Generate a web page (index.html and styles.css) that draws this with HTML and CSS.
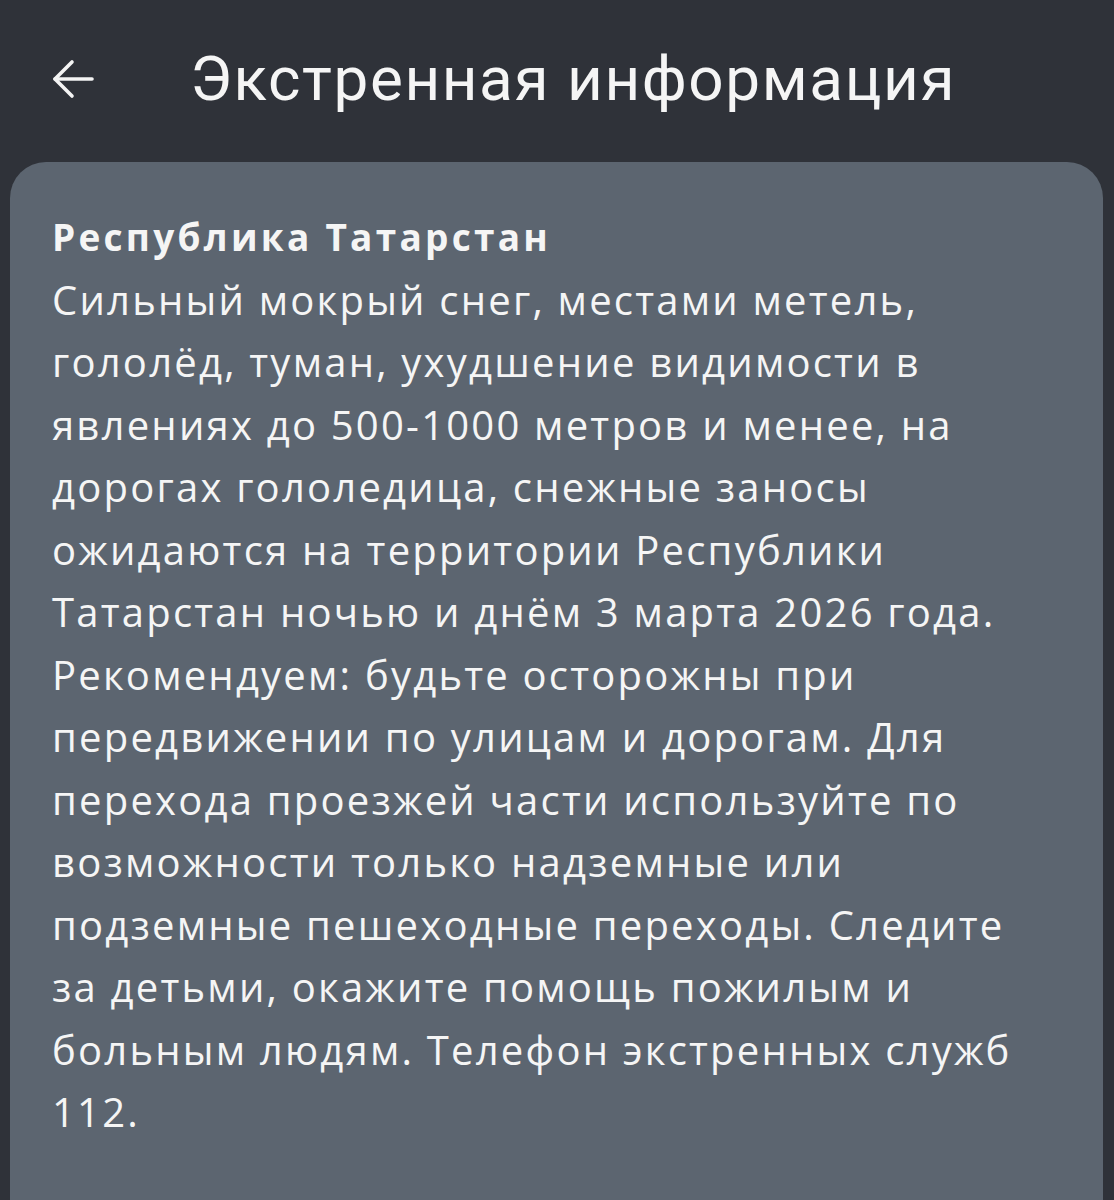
FILE: index.html
```html
<!DOCTYPE html>
<html lang="ru">
<head>
<meta charset="utf-8">
<link rel="stylesheet" href="styles.css">
</head>
<body>
<div class="screen">
  <header class="topbar">
    <svg class="back" width="44" height="44" viewBox="0 0 44 44" fill="none" stroke="#f4f4f4" stroke-width="3.6" stroke-linecap="round" stroke-linejoin="round">
      <path d="M41 22 H4"/>
      <path d="M21 5 L4 22 L21 39"/>
    </svg>
    <h1 class="title">Экстренная информация</h1>
  </header>
  <main class="card">
    <h2 class="region">Республика Татарстан</h2>
    <p class="body">Сильный мокрый снег, местами метель,<br>гололёд, туман, ухудшение видимости в<br>явлениях до 500-1000 метров и менее, на<br>дорогах гололедица, снежные заносы<br>ожидаются на территории Республики<br>Татарстан ночью и днём 3 марта 2026 года.<br>Рекомендуем: будьте осторожны при<br>передвижении по улицам и дорогам. Для<br>перехода проезжей части используйте по<br>возможности только надземные или<br>подземные пешеходные переходы. Следите<br>за детьми, окажите помощь пожилым и<br>больным людям. Телефон экстренных служб<br>112.</p>
  </main>
</div>
</body>
</html>
```
FILE: styles.css
```css
html, body {
  margin: 0;
  padding: 0;
  background: #2f3239;
}
.screen {
  width: 1114px;
  height: 1200px;
  overflow: hidden;
  background: #2f3239;
  display: flex;
  flex-direction: column;
}
.topbar {
  height: 162px;
  display: flex;
  align-items: center;
  padding: 0 0 0 51px;
  box-sizing: border-box;
}
.back {
  flex: none;
  margin-top: -4px;
}
.title {
  margin: -4px 0 0 95px;
  font-family: Roboto, "Open Sans", sans-serif;
  font-weight: 400;
  font-size: 62px;
  letter-spacing: 1.6px;
  color: #f5f5f5;
  line-height: 1;
}
.card {
  margin: 0 11px 0 10px;
  flex: 1;
  background: #5c6570;
  border-radius: 36px 36px 0 0;
  padding: 44px 0 0 42px;
  color: #f5f5f5;
}
.region {
  margin: 0;
  font-family: "Open Sans", sans-serif;
  font-weight: 700;
  font-size: 37px;
  line-height: 62.5px;
  letter-spacing: 3.25px;
}
.body {
  margin: 0;
  font-family: "Open Sans", sans-serif;
  font-weight: 400;
  font-size: 40px;
  line-height: 62.5px;
  letter-spacing: 2.22px;
  white-space: nowrap;
}
```
